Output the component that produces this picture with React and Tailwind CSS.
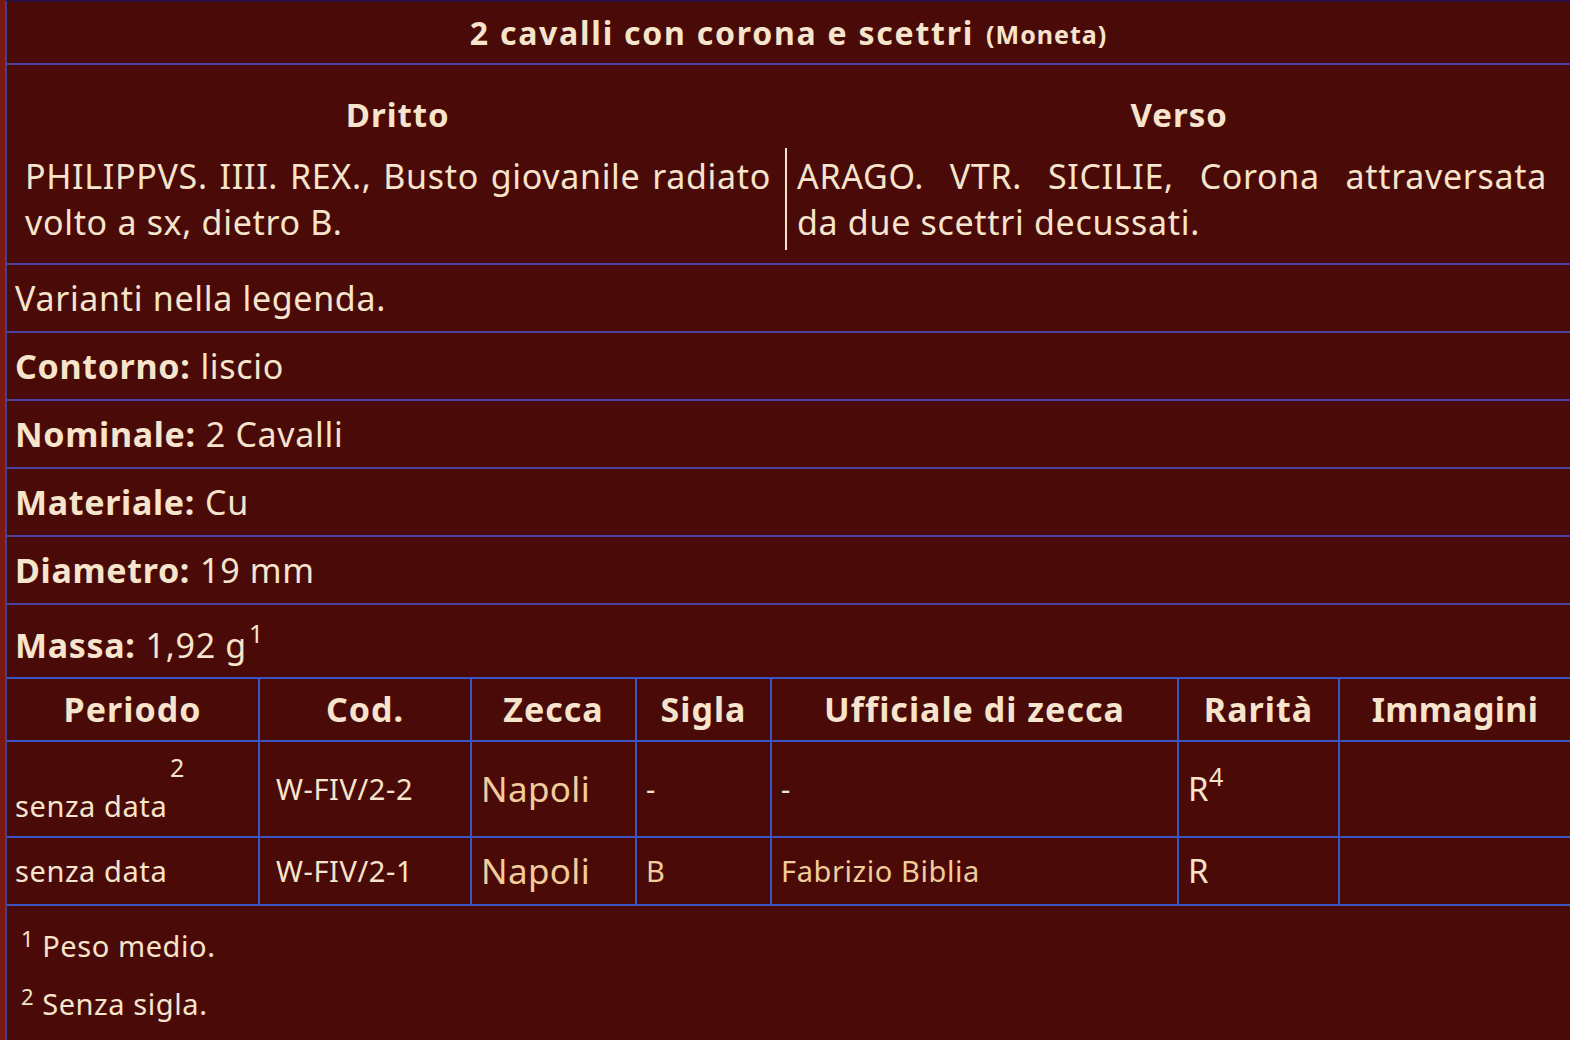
export default function App() {
  const font = { fontFamily: '"Noto Sans", "Open Sans", sans-serif' };
  const rows = [
    { label: "Contorno:", value: "liscio" },
    { label: "Nominale:", value: "2 Cavalli" },
    { label: "Materiale:", value: "Cu" },
    { label: "Diametro:", value: "19 mm" },
  ];
  const cell = "border-2 border-[#3a56c4]";

  return (
    <div className="w-full min-h-screen bg-[#7a1812] pl-[5px]" style={font}>
      <div className="min-h-screen bg-[#4a0b08] border-l-2 border-t-2 border-l-[#4c3c8c] border-t-[#2c1040] text-[#f7e4cc]">
        <div className="h-[63px] flex items-center justify-center border-b-2 border-[#4a44a0]">
          <span className="text-[32px] font-bold tracking-[0.055em]">2 cavalli con corona e scettri</span>
          <span className="text-[25px] font-bold tracking-[0.04em] ml-[12px] mt-[5px]">(Moneta)</span>
        </div>

        <div className="h-[200px] border-b-2 border-[#4a44a0] flex flex-col">
          <div className="grid grid-cols-2 pt-[28px]">
            <div className="text-center text-[33px] font-bold tracking-[0.03em] leading-[44px]">Dritto</div>
            <div className="text-center text-[33px] font-bold tracking-[0.03em] leading-[44px]">Verso</div>
          </div>
          <div className="grid grid-cols-[778px_1fr] mt-[11px] text-[34px] tracking-[0.02em] leading-[46px]">
            <div className="pl-[18px] pr-[14px] py-[5px]">
              <div className="whitespace-nowrap text-justify [text-align-last:justify]">
                PHILIPPVS. IIII. REX., Busto giovanile radiato
              </div>
              <div>volto a sx, dietro B.</div>
            </div>
            <div className="pl-[10px] pr-[23px] py-[5px] border-l-2 border-[#f7e4cc]">
              <div className="whitespace-nowrap text-justify [text-align-last:justify]">
                ARAGO. VTR. SICILIE, Corona attraversata
              </div>
              <div>da due scettri decussati.</div>
            </div>
          </div>
        </div>

        <div className="h-[68px] flex items-center px-[8px] border-b-2 border-[#4a44a0] text-[34px] tracking-[0.02em]">
          Varianti nella legenda.
        </div>
        {rows.map((r) => (
          <div key={r.label} className="h-[68px] flex items-center px-[8px] border-b-2 border-[#4a44a0] text-[34px] tracking-[0.02em]">
            <span className="font-bold mr-[10px]">{r.label}</span>
            <span>{r.value}</span>
          </div>
        ))}
        <div className="h-[72px] flex items-center px-[8px] pt-[8px] text-[34px] tracking-[0.02em]">
          <span className="font-bold mr-[10px]">Massa:</span>
          <span>
            1,92 g<sup className="text-[25px] -top-[0.6em] ml-[2px]">1</sup>
          </span>
        </div>

        <table className="w-full border-collapse">
          <thead>
            <tr className="h-[63px] text-[34px] font-bold tracking-[0.03em]">
              <th className={`w-[252px] ${cell} border-l-0`}>Periodo</th>
              <th className={`w-[212px] ${cell}`}>Cod.</th>
              <th className={`w-[165px] ${cell}`}>Zecca</th>
              <th className={`w-[135px] ${cell}`}>Sigla</th>
              <th className={`w-[407px] ${cell}`}>Ufficiale di zecca</th>
              <th className={`w-[161px] ${cell}`}>Rarità</th>
              <th className={`${cell} border-r-0 tracking-[0.01em]`}>Immagini</th>
            </tr>
          </thead>
          <tbody className="text-[29px] tracking-[0.02em]">
            <tr className="h-[96px]">
              <td className={`${cell} border-l-0 pl-[8px] align-bottom pb-[13px]`}>
                <div className="pl-[155px] text-[25px] leading-none mb-[9px]">2</div>
                <div className="leading-[34px]">senza data</div>
              </td>
              <td className={`${cell} pl-[16px]`}>W-FIV/2-2</td>
              <td className={`${cell} pl-[9px] text-[35px] tracking-[0.01em] text-[#f2cc9c]`}>Napoli</td>
              <td className={`${cell} pl-[9px]`}>-</td>
              <td className={`${cell} pl-[9px]`}>-</td>
              <td className={`${cell} pl-[9px] text-[33px]`}>
                R<sup className="text-[25px] -top-[0.6em]">4</sup>
              </td>
              <td className={`${cell} border-r-0`}></td>
            </tr>
            <tr className="h-[68px]">
              <td className={`${cell} border-l-0 pl-[8px]`}>senza data</td>
              <td className={`${cell} pl-[16px]`}>W-FIV/2-1</td>
              <td className={`${cell} pl-[9px] text-[35px] tracking-[0.01em] text-[#f2cc9c]`}>Napoli</td>
              <td className={`${cell} pl-[9px] text-[#f2cc9c]`}>B</td>
              <td className={`${cell} pl-[9px] text-[#f2cc9c]`}>Fabrizio Biblia</td>
              <td className={`${cell} pl-[9px] text-[33px]`}>R</td>
              <td className={`${cell} border-r-0`}></td>
            </tr>
          </tbody>
        </table>

        <div className="px-[14px] pt-[19px] text-[29px] tracking-[0.02em] flex flex-col gap-[16px]">
          <div className="flex items-start">
            <span className="text-[22px] leading-none mt-[2px] mr-[8px]">1</span>
            <span className="leading-[42px]">Peso medio.</span>
          </div>
          <div className="flex items-start">
            <span className="text-[22px] leading-none mt-[2px] mr-[8px]">2</span>
            <span className="leading-[42px]">Senza sigla.</span>
          </div>
        </div>
      </div>
    </div>
  );
}
